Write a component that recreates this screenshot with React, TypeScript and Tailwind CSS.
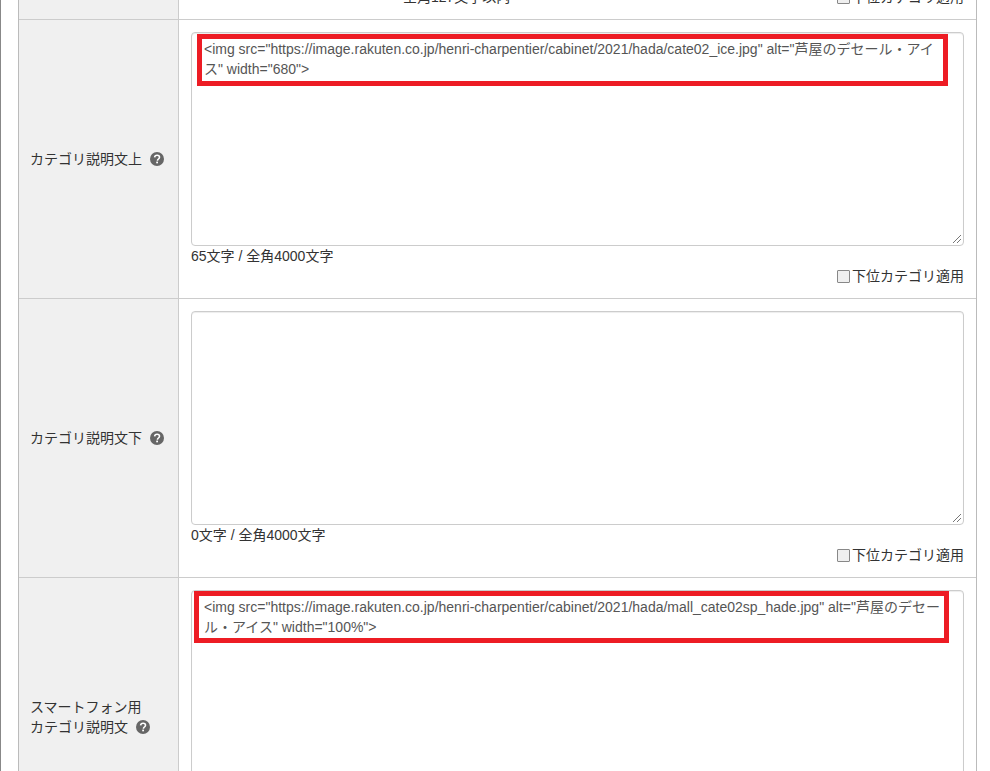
import React from "react";

const font = { fontFamily: '"Liberation Sans", "Noto Sans CJK JP", sans-serif' };

function Help() {
  return (
    <svg viewBox="0 0 14 14" className="inline-block w-[14px] h-[14px] shrink-0" aria-hidden="true">
      <circle cx="7" cy="7" r="7" fill="#666666" />
      <path d="M4.6 5.4C4.7 4 5.7 3.2 7.1 3.2c1.4 0 2.4.8 2.4 2 0 .9-.5 1.4-1.2 1.9-.6.4-.8.7-.8 1.3v.3" fill="none" stroke="#fff" strokeWidth="1.6" />
      <rect x="6.2" y="9.6" width="1.8" height="1.7" fill="#fff" />
    </svg>
  );
}

function Inherit() {
  return (
    <label className="flex items-center justify-end h-5 text-[14px] text-[#333]">
      <span className="w-[13px] h-[13px] border border-[#888] bg-[#efefef] mr-[2px] rounded-[1px]" />
      下位カテゴリ適用
    </label>
  );
}

function Area({ text, count }: { text: React.ReactNode; count?: string }) {
  return (
    <div>
      <div className="h-[214px] border border-[#ccc] rounded-[4px] bg-white px-3 py-[6px] text-[14px] leading-5 text-[#555] relative overflow-hidden shadow-[inset_0_1px_1px_rgba(0,0,0,0.075)]">
        {text}
        <svg viewBox="0 0 10 10" className="absolute right-[1px] bottom-[1px] w-[10px] h-[10px]" aria-hidden="true">
          <path d="M9 1 1 9M9 5 5 9" stroke="#777" strokeWidth="1" />
        </svg>
      </div>
      <div className="h-5 text-[14px] leading-5 text-[#333]">{count}</div>
    </div>
  );
}

function Row({ label, children }: { label: React.ReactNode; children: React.ReactNode }) {
  return (
    <div className="flex h-[279px] border-b border-[#ccc] overflow-hidden">
      <div className="w-[160px] shrink-0 bg-[#f0f0f0] border-r border-[#ccc] pl-[11px] flex items-center text-[14px] leading-[20px] text-[#333]">
        {label}
      </div>
      <div className="flex-1 min-w-0 px-3 pt-3">{children}</div>
    </div>
  );
}

export default function App() {
  return (
    <div className="h-[771px] w-[990px] overflow-hidden bg-white relative" style={font}>
      <div className="h-full border-l border-[#888] pl-[17px]">
        <div className="w-[959px] h-full border-x border-[#bbb]">
          <div className="flex h-5 border-b border-[#ccc] overflow-hidden">
            <div className="w-[160px] shrink-0 bg-[#f0f0f0] border-r border-[#ccc]" />
            <div className="flex-1 min-w-0 px-3 relative">
              <div className="absolute left-[224px] -top-[13px] text-[14px] leading-5 text-[#333] whitespace-nowrap">全角127文字以内</div>
              <div className="absolute right-3 -top-[13px]"><Inherit /></div>
            </div>
          </div>
          <Row label={<span className="flex items-center gap-[8px]">カテゴリ説明文上<Help /></span>}>
            <Area
              count="65文字 / 全角4000文字"
              text={<>&lt;img src="https://image.rakuten.co.jp/henri-charpentier/cabinet/2021/hada/cate02_ice.jpg" alt="芦屋のデセール・アイス" width="680"&gt;</>}
            />
            <Inherit />
          </Row>
          <Row label={<span className="flex items-center gap-[8px]">カテゴリ説明文下<Help /></span>}>
            <Area count="0文字 / 全角4000文字" text="" />
            <Inherit />
          </Row>
          <Row
            label={
              <div>
                <div>スマートフォン用</div>
                <div className="flex items-center gap-[8px]">カテゴリ説明文<Help /></div>
              </div>
            }
          >
            <Area
              text={<>&lt;img src="https://image.rakuten.co.jp/henri-charpentier/cabinet/2021/hada/mall_cate02sp_hade.jpg" alt="芦屋のデセール・アイス" width="100%"&gt;</>}
            />
          </Row>
        </div>
      </div>
      <div className="absolute left-[197px] top-[34px] w-[751px] h-[52px] border-[5px] border-[#ed1c24]" />
      <div className="absolute left-[194px] top-[591px] w-[755px] h-[52px] border-[5px] border-[#ed1c24]" />
    </div>
  );
}
